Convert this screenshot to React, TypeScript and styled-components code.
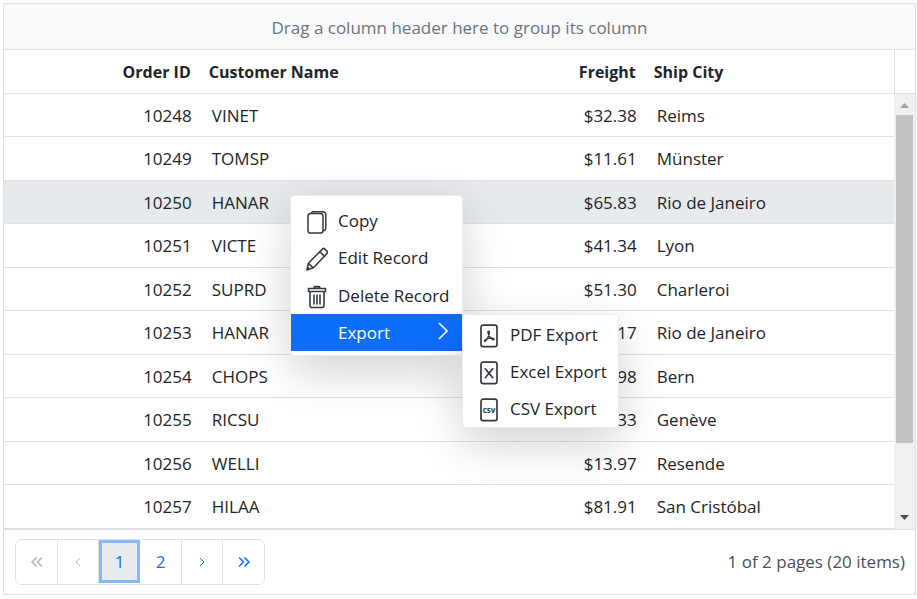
import React from "react";
import styled, { createGlobalStyle } from "styled-components";

const GlobalStyle = createGlobalStyle`
  * { box-sizing: border-box; }
  body {
    margin: 0;
    background: #fff;
    color: #212529;
    font: 17px/24px "Segoe UI", "Open Sans", "Noto Sans", sans-serif;
  }
`;

const line = "#dee2e6";

const Page = styled.main`
  position: relative;
  padding: 3px 1px 4px 3px;
`;

const Grid = styled.section`
  border: 1px solid ${line};
`;

const GroupArea = styled.div`
  padding: 12px 8px 9px;
  border-bottom: 1px solid ${line};
  background: #f8f9fa;
  color: #6c757d;
  text-align: center;
`;

const HeaderRow = styled.div`
  display: flex;
  border-bottom: 1px solid ${line};
`;

const ScrollFiller = styled.div`
  flex: 0 0 21px;
  border-left: 1px solid ${line};
`;

const Body = styled.div`
  display: flex;
`;

const Table = styled.table`
  flex: 1;
  width: 0;
  table-layout: fixed;
  border-collapse: separate;
  border-spacing: 0;
`;

const HeadCell = styled.th<{ $right?: boolean }>`
  height: 43px;
  padding: 0 11px 0 7px;
  text-align: ${(p) => (p.$right ? "right" : "left")};
  font-size: 16px;
  font-weight: 700;
  white-space: nowrap;
`;

const Row = styled.tr<{ $active?: boolean }>`
  height: 43px;
  background: ${(p) => (p.$active ? "#e6eaed" : "#fff")};
  &:nth-child(even) { height: 44px; }
`;

const Cell = styled.td<{ $right?: boolean }>`
  padding: 1px 10px 0;
  border-bottom: 1px solid ${line};
  text-align: ${(p) => (p.$right ? "right" : "left")};
  white-space: nowrap;
`;

const ScrollBar = styled.div`
  flex: 0 0 21px;
  display: flex;
  flex-direction: column;
  align-items: center;
  background: #f0f0f0;
`;

const ScrollArrow = styled.svg`
  flex: 0 0 21px;
  width: 17px;
  height: 21px;
`;

const ScrollTrack = styled.div`
  flex: 1;
  width: 17px;
`;

const ScrollThumb = styled.div`
  height: 83.5%;
  background: #c1c1c1;
`;

const Pager = styled.footer`
  display: flex;
  align-items: center;
  justify-content: space-between;
  padding: 9px 10px 9px 11px;
  border-top: 1px solid ${line};
`;

const PageList = styled.nav`
  display: grid;
  grid-template-columns: 42px 41px 41px 42px 41px 41px;
  height: 46px;
  border: 1px solid ${line};
  border-radius: 6px;
`;

const PageButton = styled.button<{ $current?: boolean }>`
  display: flex;
  align-items: center;
  justify-content: center;
  padding: 0;
  border: 0;
  border-right: 1px solid ${line};
  background: transparent;
  color: #0d6efd;
  font: inherit;
  &:last-child { border-right: 0; }
  &:disabled { color: #adb5bd; }
  ${(p) =>
    p.$current &&
    `border: 3px solid #86b7fe !important; background: #e9ecef; margin-bottom: 1px;`}
`;

const PageInfo = styled.span`
  color: #495057;
`;

const Menu = styled.ul`
  position: absolute;
  margin: 0;
  list-style: none;
  border: 1px solid #ececec;
  border-radius: 4px;
  background: #fff;
  box-shadow: 0 16px 48px rgba(0, 0, 0, 0.175);
`;

const MenuItem = styled.li`
  height: 37px;
`;

const MainMenu = styled(Menu)`
  left: 290px;
  top: 195px;
  width: 173px;
  padding: 6px 0 4px;
  ${MenuItem}:nth-child(2) { height: 38px; }
`;

const SubMenu = styled(Menu)`
  left: 462px;
  top: 314px;
  width: 157px;
  padding: 1px 0 0;
`;

const MenuButton = styled.button<{ $selected?: boolean }>`
  display: grid;
  grid-template-columns: 22px 1fr auto;
  align-items: center;
  gap: 10px;
  width: 100%;
  height: 100%;
  padding: 0 12px 0 15px;
  border: 0;
  background: ${(p) => (p.$selected ? "#0d6efd" : "transparent")};
  color: ${(p) => (p.$selected ? "#fff" : "#212529")};
  font: inherit;
  text-align: left;
  white-space: nowrap;
`;

const IconBox = styled.svg`
  display: block;
  width: 22px;
  height: 24px;
  margin-top: 2px;
  fill: none;
  stroke: #343a40;
  stroke-width: 1.7;
  stroke-linecap: round;
  stroke-linejoin: round;
`;

const Arrow = styled.svg`
  display: block;
  width: 14px;
  height: 18px;
  margin-bottom: 3px;
  fill: none;
  stroke: currentColor;
  stroke-width: 1.6;
`;

const PagerIcon = styled.svg`
  width: 14px;
  height: 12px;
  fill: none;
  stroke: currentColor;
`;

const orders = [
  ["10248", "VINET", "$32.38", "Reims"],
  ["10249", "TOMSP", "$11.61", "Münster"],
  ["10250", "HANAR", "$65.83", "Rio de Janeiro"],
  ["10251", "VICTE", "$41.34", "Lyon"],
  ["10252", "SUPRD", "$51.30", "Charleroi"],
  ["10253", "HANAR", "$58.17", "Rio de Janeiro"],
  ["10254", "CHOPS", "$22.98", "Bern"],
  ["10255", "RICSU", "$148.33", "Genève"],
  ["10256", "WELLI", "$13.97", "Resende"],
  ["10257", "HILAA", "$81.91", "San Cristóbal"],
];

const Columns = () => (
  <colgroup>
    <col width="22.22%" />
    <col width="27.78%" />
    <col width="22.22%" />
    <col width="27.78%" />
  </colgroup>
);

const CopyIcon = () => (
  <IconBox viewBox="0 0 22 24">
    <path d="M5 3.5 6.5 1.7h10.3c1.8 0 3 1.2 3 3v13.2c0 1.5-.8 2.5-2.2 2.800" strokeWidth="1.5" />
    <rect x="2" y="3.5" width="15" height="19.5" rx="2.6" fill="#fff" strokeWidth="1.5" />
  </IconBox>
);

const EditIcon = () => (
  <IconBox viewBox="0 0 22 24">
    <path
      d="m.9 23 1.5-6.800L16.600 1.900q1-1 2 0l2.500 2.500q1 1 0 2L7.200 20.900z M2.400 16.200l4.800 4.700 M13.800 4.800l4.600 4.600 M1.800 20.400l1.600 1.600"
      strokeWidth="1.5"
    />
  </IconBox>
);

const DeleteIcon = () => (
  <IconBox viewBox="0 0 22 24">
    <path
      d="M2.5 3.5h17v3h-17z M8 3l.6-1.4h4.8L14 3 M4 6.8v13.4q0 2.3 2.3 2.3h9.4q2.3 0 2.3-2.3V6.8 M8 10v9 M11 10v9 M14 10v9"
      strokeWidth="1.6"
    />
  </IconBox>
);

const PdfIcon = () => (
  <IconBox viewBox="0 0 22 24">
    <rect x="3" y="1.2" width="16" height="21.5" rx="2.2" />
    <path
      d="M10.8 7.1c-1-.2-1.1 1-.5 2.7.9 2.5 2.6 5.1 4.800 6 .9.3 1.5-.7.6-1.3-1.7-.9-5.400-.2-7.900 1-1.500.8-1.700 2-.8 1.800 1.600-.6 4.500-6.500 4.500-9.100 0-.6-.2-1-.7-1.100z"
      strokeWidth="1.4"
    />
  </IconBox>
);

const ExcelIcon = () => (
  <IconBox viewBox="0 0 22 24">
    <rect x="3" y="1.2" width="16" height="21.5" rx="2.2" />
    <path d="m7.3 7.8 7.4 8.9 M14.7 7.8l-7.4 8.9" />
  </IconBox>
);

const CsvText = styled.text`
  fill: #343a40;
  stroke: none;
  font: 700 8px "Open Sans", sans-serif;
  text-anchor: middle;
`;

const CsvIcon = () => (
  <IconBox viewBox="0 0 22 24">
    <rect x="3" y="1.2" width="16" height="21.5" rx="2.2" />
    <CsvText x="11" y="14.5">csv</CsvText>
  </IconBox>
);

const chevrons: Record<string, string> = {
  first: "M6.5 1.5 2 6l4.5 4.5 M12 1.5 7.5 6l4.5 4.5",
  previous: "M9 2 5 6l4 4",
  next: "m5 2 4 4-4 4",
  last: "M2 1.5 6.5 6 2 10.5 M7.5 1.5 12 6l-4.5 4.5",
};

const PagerChevron = ({ kind }: { kind: string }) => (
  <PagerIcon viewBox="0 0 14 12" strokeWidth={kind === "first" || kind === "last" ? 1.5 : 1}>
    <path d={chevrons[kind]} />
  </PagerIcon>
);

export default function App() {
  return (
    <>
      <GlobalStyle />
      <Page>
        <Grid>
          <GroupArea>Drag a column header here to group its column</GroupArea>
          <HeaderRow>
            <Table>
              <Columns />
              <thead>
                <tr>
                  <HeadCell $right scope="col">Order ID</HeadCell>
                  <HeadCell scope="col">Customer Name</HeadCell>
                  <HeadCell $right scope="col">Freight</HeadCell>
                  <HeadCell scope="col">Ship City</HeadCell>
                </tr>
              </thead>
            </Table>
            <ScrollFiller />
          </HeaderRow>
          <Body>
            <Table aria-label="Orders">
              <Columns />
              <tbody>
                {orders.map(([id, name, freight, city]) => (
                  <Row key={id} $active={id === "10250"}>
                    <Cell $right>{id}</Cell>
                    <Cell>{name}</Cell>
                    <Cell $right>{freight}</Cell>
                    <Cell>{city}</Cell>
                  </Row>
                ))}
              </tbody>
            </Table>
            <ScrollBar>
              <ScrollArrow viewBox="0 0 17 21"><path d="M4 14h9L8.5 9z" fill="#a3a3a3" /></ScrollArrow>
              <ScrollTrack><ScrollThumb /></ScrollTrack>
              <ScrollArrow viewBox="0 0 17 21"><path d="M4 7h9l-4.5 5z" fill="#505050" /></ScrollArrow>
            </ScrollBar>
          </Body>
          <Pager>
            <PageList aria-label="Pages">
              <PageButton disabled aria-label="First page"><PagerChevron kind="first" /></PageButton>
              <PageButton disabled aria-label="Previous page"><PagerChevron kind="previous" /></PageButton>
              <PageButton $current aria-current="page">1</PageButton>
              <PageButton>2</PageButton>
              <PageButton aria-label="Next page"><PagerChevron kind="next" /></PageButton>
              <PageButton aria-label="Last page"><PagerChevron kind="last" /></PageButton>
            </PageList>
            <PageInfo>1 of 2 pages (20 items)</PageInfo>
          </Pager>
        </Grid>
        <MainMenu>
          <MenuItem><MenuButton><CopyIcon />Copy</MenuButton></MenuItem>
          <MenuItem><MenuButton><EditIcon />Edit Record</MenuButton></MenuItem>
          <MenuItem><MenuButton><DeleteIcon />Delete Record</MenuButton></MenuItem>
          <MenuItem>
            <MenuButton $selected aria-haspopup="menu" aria-expanded="true">
              <span />
              Export
              <Arrow viewBox="0 0 14 18"><path d="m3 1 8 8-8 8" /></Arrow>
            </MenuButton>
          </MenuItem>
        </MainMenu>
        <SubMenu>
          <MenuItem><MenuButton><PdfIcon />PDF Export</MenuButton></MenuItem>
          <MenuItem><MenuButton><ExcelIcon />Excel Export</MenuButton></MenuItem>
          <MenuItem><MenuButton><CsvIcon />CSV Export</MenuButton></MenuItem>
        </SubMenu>
      </Page>
    </>
  );
}
